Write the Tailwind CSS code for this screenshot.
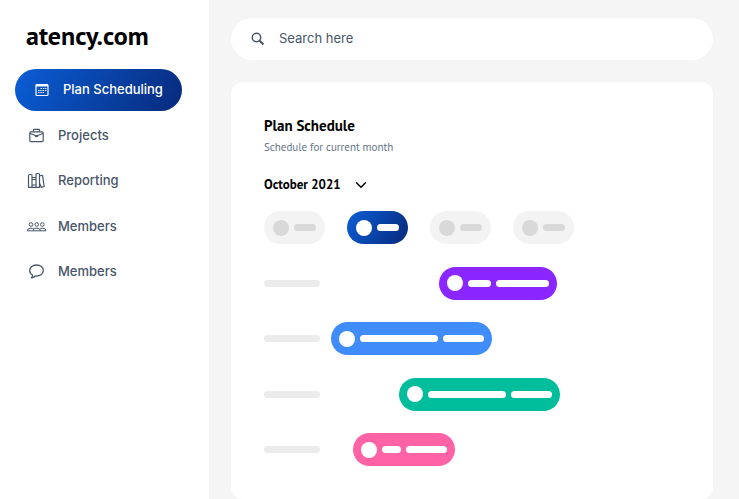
<!DOCTYPE html>
<html lang="en">
<head>
<meta charset="utf-8">
<meta name="viewport" content="width=device-width, initial-scale=1">
<title>Plan Schedule</title>
<script src="https://cdn.jsdelivr.net/npm/@tailwindcss/browser@4"></script>
</head>
<body class="flex min-h-screen bg-[#f5f5f5] font-['Inter',sans-serif] text-[#475569]">
<aside class="w-[209px] shrink-0 bg-white pt-5">
  <a href="#" class="block pl-[26px] font-['PT_Sans','Noto_Sans',sans-serif] text-[26px] leading-8 font-semibold text-black">atency.com</a>
  <nav class="mt-[17px] flex h-[224px] flex-col justify-between pr-[27px] pl-[15px] text-[13px] font-medium">
    <a href="#" aria-current="page" class="flex h-[42px] items-center gap-[14px] rounded-full bg-linear-120 from-[#0a5ed7] to-[#072a7c] pl-5 text-white">
      <svg class="h-[14px] w-[14px]" viewBox="0 0 14 14" fill="none" stroke="currentColor"><rect x="1" y="1.500" width="12" height="11" rx="1" stroke-width="1.200"/><path d="M1 2.500h12" stroke-width="2"/><path d="M5.500 5.500h6M3 7.500h8.500M3 9.500h6" stroke-width=".9" stroke-dasharray="1.500 .8"/></svg>
      <span>Plan Scheduling</span>
    </a>
    <a href="#" class="flex h-[42px] items-center gap-3 pl-[11px]">
      <svg class="h-5 w-5" viewBox="0 0 20 20" fill="none" stroke="currentColor" stroke-width="1.200" stroke-linejoin="round"><rect x="3.800" y="5.800" width="13.400" height="9.900" rx="1.200"/><path d="M7.500 5.500V4q0-.7.700-.7h4.600q.7 0 .7.700v1.500M4 7.500l5.500 2h2l5.500-2M9 9.800q1.500 1.500 3 0"/></svg>
      <span>Projects</span>
    </a>
    <a href="#" class="flex h-[42px] items-center gap-3 pl-[11px]">
      <svg class="h-5 w-5" viewBox="0 0 20 20" fill="none" stroke="currentColor" stroke-width="1.200" stroke-linejoin="round"><path d="M2.500 4.500q0-1 1-1H5q1 0 1 1v11.800H2.500zM6 6.500h4v9.800H6zM6 8.500h4M6 14h4M10 3.500q0-1 1-1h1.500q1 0 1 1v12.800H10zM13.600 5l2.300-.7q.6 0 .7.600L18.200 15.500l-3 .8-1.700-4.300"/></svg>
      <span>Reporting</span>
    </a>
    <a href="#" class="flex h-[42px] items-center gap-3 pl-[11px]">
      <svg class="h-5 w-5 overflow-visible" viewBox="0 0 20 20" fill="none" stroke="currentColor" stroke-linejoin="round"><circle cx="5" cy="7.500" r="1.800"/><circle cx="10.700" cy="7.500" r="1.800"/><circle cx="16.300" cy="7.500" r="1.800"/><path d="M1.300 13.800q0-2.600 3.700-2.600 1.900 0 2.900.8 1-.8 2.800-.8t2.800.8q1-.8 2.800-.8 3.700 0 3.700 2.600zM7.900 12q-1 .8-.8 1.800M13.500 12q1 .8.800 1.800"/></svg>
      <span>Members</span>
    </a>
    <a href="#" class="flex h-[42px] items-center gap-3 pl-[11px]">
      <svg class="h-5 w-5" viewBox="0 0 20 20" fill="none" stroke="currentColor" stroke-width="1.300" stroke-linejoin="round"><path d="M10.500 3c-3.900 0-6.800 2.300-6.800 5.500 0 2 1 3.500 2.800 4.500.2 1-.4 2-1.100 2.800 1.600 0 2.900-.7 3.700-1.800 4.800.6 8.200-1.900 8.200-5.500 0-3.200-2.900-5.500-6.800-5.500z"/></svg>
      <span>Members</span>
    </a>
  </nav>
</aside>
<main class="flex flex-1 flex-col gap-[22px] pt-[18px] pr-[26px] pl-[22px]">
  <label class="flex h-[42px] items-center gap-[14px] rounded-full bg-white pl-5">
    <svg class="h-[14px] w-[14px]" viewBox="0 0 14 14" fill="none" stroke="currentColor"><circle cx="5.500" cy="5.500" r="4.200" stroke-width="1.500"/><path d="M8.700 8.700l3.800 3.800" stroke-width="2"/></svg>
    <input type="search" aria-label="Search" placeholder="Search here" class="min-w-0 flex-1 bg-transparent text-[13px] outline-none placeholder:text-[#475569]">
  </label>
  <section class="flex-1 rounded-xl bg-white px-[33px] pt-[34px] pb-[33px]">
    <h1 class="font-['PT_Sans','Noto_Sans',sans-serif] text-[15px] leading-5 font-bold text-black">Plan Schedule</h1>
    <p class="mt-[3px] font-['PT_Sans','Noto_Sans',sans-serif] text-[11px] leading-4 text-[#64748b]">Schedule for current month</p>
    <button type="button" class="mt-5 flex items-center gap-[14px] font-['PT_Sans','Noto_Sans',sans-serif] text-[13px] leading-5 font-bold text-black">
      October 2021
      <svg class="h-3 w-3" viewBox="0 0 12 12" fill="none" stroke="currentColor" stroke-width="1.400" stroke-linecap="round" stroke-linejoin="round"><path d="M1.500 3.700L6 8.300l4.500-4.600"/></svg>
    </button>
    <div class="mt-4 flex h-[255px] flex-col justify-between">
      <div class="flex gap-[22px]">
        <div class="flex h-[33px] w-[61px] items-center gap-[5px] rounded-full bg-[#f3f3f3] px-[9px]"><i class="size-4 rounded-full bg-[#d9d9d9]"></i><i class="h-[7px] flex-1 rounded-full bg-[#d9d9d9]"></i></div>
        <div class="flex h-[33px] w-[61px] items-center gap-[5px] rounded-full bg-linear-120 from-[#0a5ed7] to-[#072a7c] px-[9px]"><i class="size-4 rounded-full bg-white"></i><i class="h-[7px] flex-1 rounded-full bg-white"></i></div>
        <div class="flex h-[33px] w-[61px] items-center gap-[5px] rounded-full bg-[#f3f3f3] px-[9px]"><i class="size-4 rounded-full bg-[#d9d9d9]"></i><i class="h-[7px] flex-1 rounded-full bg-[#d9d9d9]"></i></div>
        <div class="flex h-[33px] w-[61px] items-center gap-[5px] rounded-full bg-[#f3f3f3] px-[9px]"><i class="size-4 rounded-full bg-[#d9d9d9]"></i><i class="h-[7px] flex-1 rounded-full bg-[#d9d9d9]"></i></div>
      </div>
      <div class="flex items-center">
        <i class="h-[7px] w-14 rounded-full bg-[#ebebeb]"></i>
        <div class="ml-[119px] flex h-[33px] w-[118px] items-center gap-[5px] rounded-full bg-[#8a26ff] px-2"><i class="size-4 rounded-full bg-white"></i><i class="h-[7px] w-[23px] rounded-full bg-white"></i><i class="h-[7px] flex-1 rounded-full bg-white"></i></div>
      </div>
      <div class="flex items-center">
        <i class="h-[7px] w-14 rounded-full bg-[#ebebeb]"></i>
        <div class="ml-[11px] flex h-[33px] w-[161px] items-center gap-[5px] rounded-full bg-[#3f8cfa] px-2"><i class="size-4 rounded-full bg-white"></i><i class="h-[7px] w-[78px] rounded-full bg-white"></i><i class="h-[7px] flex-1 rounded-full bg-white"></i></div>
      </div>
      <div class="flex items-center">
        <i class="h-[7px] w-14 rounded-full bg-[#ebebeb]"></i>
        <div class="ml-[79px] flex h-[33px] w-[161px] items-center gap-[5px] rounded-full bg-[#00be9c] px-2"><i class="size-4 rounded-full bg-white"></i><i class="h-[7px] w-[78px] rounded-full bg-white"></i><i class="h-[7px] flex-1 rounded-full bg-white"></i></div>
      </div>
      <div class="flex items-center">
        <i class="h-[7px] w-14 rounded-full bg-[#ebebeb]"></i>
        <div class="ml-[33px] flex h-[33px] w-[102px] items-center gap-[5px] rounded-full bg-[#ff62a5] px-2"><i class="size-4 rounded-full bg-white"></i><i class="h-[7px] w-[19px] rounded-full bg-white"></i><i class="h-[7px] flex-1 rounded-full bg-white"></i></div>
      </div>
    </div>
  </section>
</main>
</body>
</html>
